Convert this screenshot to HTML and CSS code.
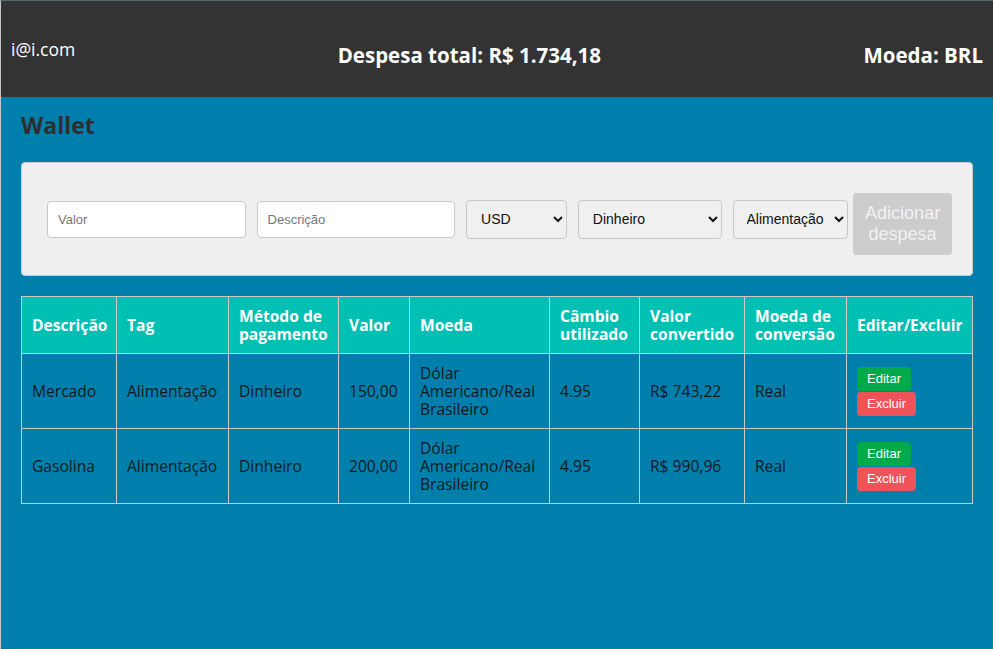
FILE: index.html
```html
<!DOCTYPE html>
<html lang="pt-BR">
<head>
<meta charset="utf-8">
<title>Wallet</title>
<link rel="stylesheet" href="styles.css">
</head>
<body>
<div class="app">
  <header class="topbar">
    <p class="email">i@i.com</p>
    <h3 class="total">Despesa total: R$ 1.734,18</h3>
    <h3 class="currency">Moeda: BRL</h3>
  </header>
  <main class="content">
    <h2 class="title">Wallet</h2>
    <form class="expense-form">
      <input class="field field-value" type="text" placeholder="Valor">
      <input class="field field-desc" type="text" placeholder="Descrição">
      <select class="select select-currency"><option>USD</option></select>
      <select class="select select-method"><option>Dinheiro</option></select>
      <select class="select select-tag"><option>Alimentação</option></select>
      <button class="add-btn" type="button" disabled>Adicionar despesa</button>
    </form>
    <table class="expenses">
      <colgroup>
        <col class="c1"><col class="c2"><col class="c3"><col class="c4"><col class="c5"><col class="c6"><col class="c7"><col class="c8"><col class="c9">
      </colgroup>
      <thead>
        <tr>
          <th>Descrição</th>
          <th>Tag</th>
          <th>Método de pagamento</th>
          <th>Valor</th>
          <th>Moeda</th>
          <th>Câmbio utilizado</th>
          <th>Valor convertido</th>
          <th>Moeda de conversão</th>
          <th>Editar/Excluir</th>
        </tr>
      </thead>
      <tbody>
        <tr>
          <td>Mercado</td>
          <td>Alimentação</td>
          <td>Dinheiro</td>
          <td>150,00</td>
          <td>Dólar Americano/Real Brasileiro</td>
          <td>4.95</td>
          <td>R$ 743,22</td>
          <td>Real</td>
          <td><button class="btn btn-edit" type="button">Editar</button><button class="btn btn-delete" type="button">Excluir</button></td>
        </tr>
        <tr>
          <td>Gasolina</td>
          <td>Alimentação</td>
          <td>Dinheiro</td>
          <td>200,00</td>
          <td>Dólar Americano/Real Brasileiro</td>
          <td>4.95</td>
          <td>R$ 990,96</td>
          <td>Real</td>
          <td><button class="btn btn-edit" type="button">Editar</button><button class="btn btn-delete" type="button">Excluir</button></td>
        </tr>
      </tbody>
    </table>
  </main>
</div>
</body>
</html>
```

FILE: styles.css
```css
* { box-sizing: border-box; }
html, body { margin: 0; padding: 0; height: 100%; }
body {
  font-family: "Open Sans", "DejaVu Sans", sans-serif;
  background: #007fad;
}
.app {
  min-height: 100%;
  border-top: 1px solid #5d686d;
  border-left: 1px solid #c4c8ca;
  background: #007fad;
}
.topbar {
  height: 96px;
  background: #333333;
  color: #ffffff;
  display: flex;
  align-items: center;
  justify-content: space-between;
  padding: 0 10px;
}
.email {
  margin: 0;
  font-size: 17.5px;
}
.total, .currency {
  margin: 12px 0 0;
  font-size: 20.5px;
  font-weight: 700;
}
.content {
  padding: 13px 20px 20px;
}
.title {
  margin: 0 0 22px;
  font-size: 23px;
  line-height: 30px;
  font-weight: 700;
  color: #2e2e2e;
}
.expense-form {
  display: flex;
  align-items: center;
  background: #efefef;
  border: 1px solid #c9cdd0;
  border-radius: 4px;
  height: 114px;
  padding: 0 20px 0 25px;
}
.field {
  width: 199px;
  height: 37px;
  margin-right: 11px;
  border: 1px solid #c8c8c8;
  border-radius: 4px;
  background: #ffffff;
  padding: 0 10px;
  font-family: "Liberation Sans", Arial, sans-serif;
  font-size: 13px;
}
.field::placeholder { color: #777777; }
.select {
  height: 39px;
  margin-right: 11px;
  border: 1px solid #c8c8c8;
  border-radius: 4px;
  background: #f0f0f0;
  padding: 0 8px 0 10px;
  font-family: "Liberation Sans", Arial, sans-serif;
  font-size: 14px;
  color: #111111;
}
.select-currency { width: 101px; }
.select-method { width: 144px; }
.select-tag { width: 116px; margin-right: 5px; padding: 0 0 0 9px; }
.add-btn {
  width: 99px;
  height: 62px;
  margin-top: 9px;
  border: none;
  border-radius: 4px;
  background: #cccccc;
  color: #f2f2f2;
  font-family: "Liberation Sans", Arial, sans-serif;
  font-size: 18px;
  line-height: 21px;
  padding: 0 4px;
}
.expenses {
  margin-top: 20px;
  width: 951px;
  table-layout: fixed;
  border-collapse: collapse;
  font-size: 15.6px;
  line-height: 18px;
}
.c1 { width: 95px; }
.c2 { width: 112px; }
.c3 { width: 110px; }
.c4 { width: 71px; }
.c5 { width: 140px; }
.c6 { width: 90px; }
.c7 { width: 105px; }
.c8 { width: 102px; }
.c9 { width: 126px; }
.expenses th, .expenses td {
  border: 1px solid #cdc9c6;
  padding: 10px 10px;
  text-align: left;
  vertical-align: middle;
}
.expenses th {
  background: #00bfb3;
  color: #ffffff;
  font-weight: 700;
  height: 57px;
}
.expenses td {
  color: #0f1a20;
  height: 75px;
}
.btn {
  display: block;
  border: none;
  border-radius: 4px;
  color: #ffffff;
  font-family: "Liberation Sans", Arial, sans-serif;
  font-size: 13px;
  height: 24px;
  padding: 0 10px;
}
.btn-edit { background: #00a94a; margin-bottom: 1px; }
.btn-delete { background: #f0525a; }
```
